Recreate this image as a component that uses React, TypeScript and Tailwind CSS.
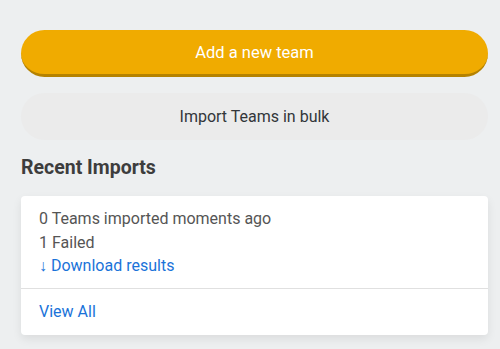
import React from "react";

export default function App() {
  return (
    <div
      className="w-[500px] h-[349px] bg-[#edeff0] pl-[21px] pr-[12px] pt-[30px] overflow-hidden"
      style={{ fontFamily: "Roboto, 'Liberation Sans', sans-serif" }}
    >
      <button className="w-full h-[47px] rounded-full bg-[#f0ab00] border-b-[3px] border-[#b58200] text-white text-[16.5px] flex items-center justify-center pt-[2px]">
        Add a new team
      </button>
      <button className="mt-[16px] w-full h-[47px] rounded-full bg-[#ebebeb] text-[#32363a] text-[16px] flex items-center justify-center">
        Import Teams in bulk
      </button>
      <h2 className="mt-[15px] text-[19.5px] font-bold text-[#3d3d3d] leading-[26px]">
        Recent Imports
      </h2>
      <div className="mt-[15px] bg-white rounded-[4px] shadow-[0_4px_10px_rgba(0,0,0,0.08)]">
        <div className="px-[18px] pt-[11px] pb-[10px] text-[16px] leading-[23.5px]">
          <div className="text-[#555555]">0 Teams imported moments ago</div>
          <div className="text-[#555555]">1 Failed</div>
          <div className="text-[#1a73d9]">↓ Download results</div>
        </div>
        <div className="border-t border-[#e0e0e0] px-[18px] h-[47px] flex items-center text-[16px] text-[#1a73d9]">
          View All
        </div>
      </div>
    </div>
  );
}
